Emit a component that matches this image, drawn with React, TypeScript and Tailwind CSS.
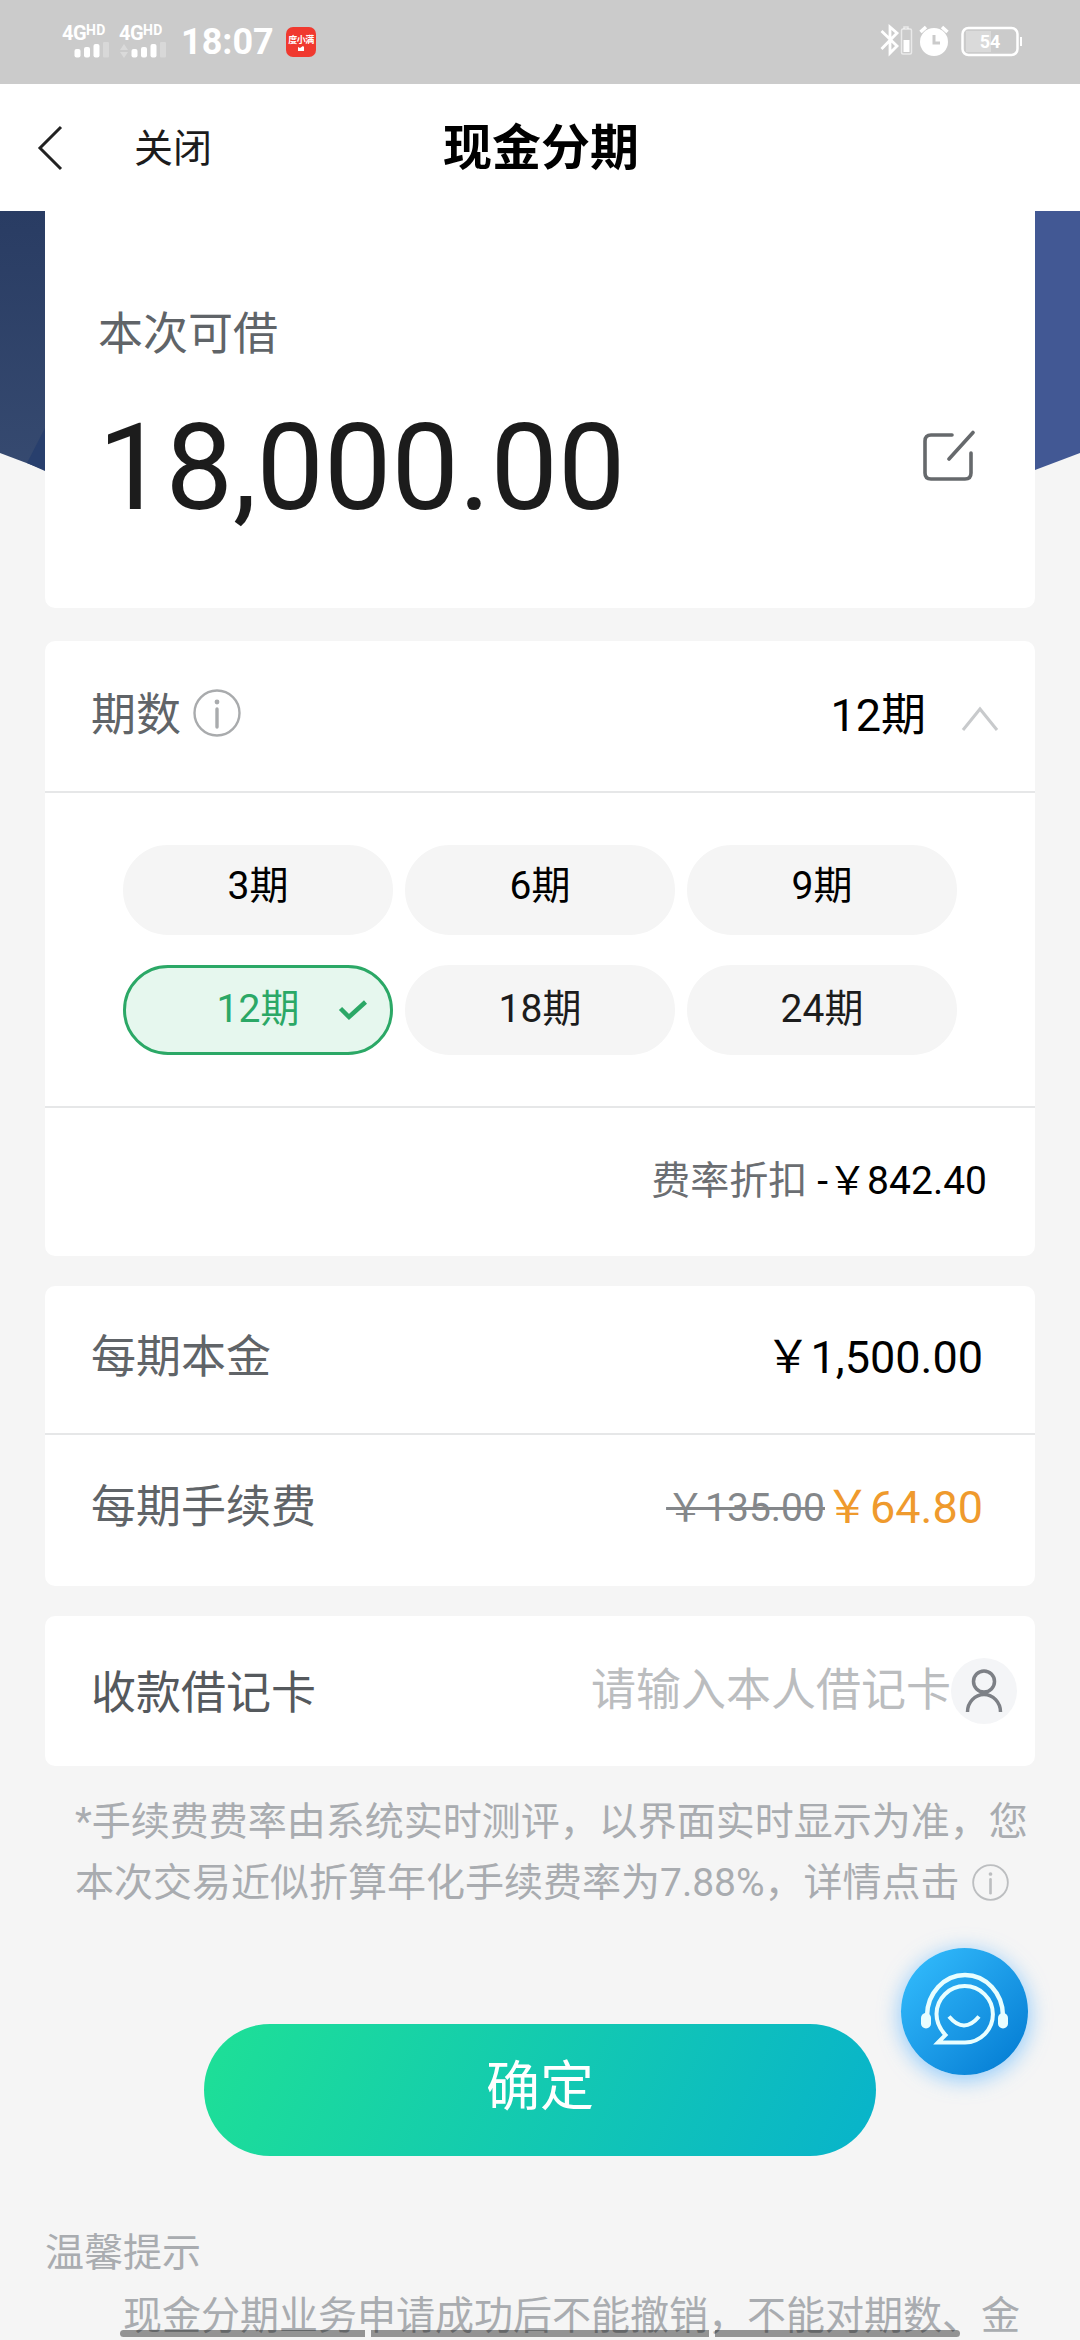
import React, { useState } from "react";

const terms = [3, 6, 9, 12, 18, 24];

function Signal({ data }: { data?: boolean }) {
  return (
    <div className="flex h-[36px] w-[48px] flex-col text-white">
      <div className="flex h-[17px] items-start leading-none font-bold">
        <span className="text-[20px] leading-[17px] tracking-[-0.5px]">4G</span>
        <span className="text-[14px] leading-[11px] tracking-[0.2px]">HD</span>
      </div>
      <svg width="48" height="18" viewBox="0 0 48 18" fill="#fff">
        {data && <path d="M1 8L5 2L9 8ZM1 10L5 16L9 10Z" opacity="0.3" />}
        <rect x="12.500" y="7" width="6" height="8.500" rx="2" />
        <rect x="22" y="5" width="6" height="10.500" rx="2" />
        <rect x="31.500" y="2" width="6" height="13.500" rx="2" />
        <rect x="41" y="0" width="6" height="15.500" rx="1" opacity="0.25" />
      </svg>
    </div>
  );
}

function StatusBar() {
  return (
    <div className="flex h-[84px] items-center bg-[#cbcbcb] pr-[58px] pl-[62px]">
      <div className="flex w-[114px] shrink-0 gap-[9px] pt-[2px]">
        <Signal />
        <Signal data />
      </div>
      <span className="ml-[5px] w-[95px] text-[36px] leading-[40px] font-bold text-white">18:07</span>
      <div className="ml-[10px] flex size-[30px] flex-col items-center rounded-[7px] bg-[#f0392f] pt-[7px] text-white">
        <span className="text-[9px] leading-[12px] font-bold tracking-[-0.5px] whitespace-nowrap">度小满</span>
        <svg width="8" height="5" viewBox="0 0 8 5" fill="#fff"><path d="M1 1L3 2L6 0L7 1V5H1Z" /></svg>
      </div>
      <div className="ml-auto flex items-center">
        <svg width="142" height="34" viewBox="0 0 142 34" fill="none" stroke="#fff" className="-mt-[2px]">
          <path d="M1.500 7L17 22L10 29V3L17 9L1.500 25" strokeWidth="2.800" />
          <path d="M24 5V3H28V5" strokeWidth="1.500" opacity="0.6" />
          <rect x="21.500" y="5" width="10" height="25" rx="1.500" strokeWidth="1.500" opacity="0.6" />
          <rect x="23.500" y="16" width="6" height="12" fill="#fff" stroke="none" />
          <circle cx="54" cy="18" r="14" fill="#fff" stroke="none" />
          <path d="M54 11V19H60" stroke="#cbcbcb" strokeWidth="3" />
          <path d="M40.500 8L46 3M62 3L67.500 8" strokeWidth="3.500" />
          <rect x="82.500" y="4" width="55" height="27" rx="6" strokeWidth="2.500" />
          <path d="M86 7H111V28H86Z" fill="#fff" stroke="none" opacity="0.3" />
          <path d="M141 13V22" strokeWidth="2" />
          <text x="110" y="24" textAnchor="middle" fontSize="18" fontWeight="700" fill="#fff" stroke="none">54</text>
        </svg>
      </div>
    </div>
  );
}

function NavBar() {
  return (
    <header className="grid h-[127px] grid-cols-[1fr_auto_1fr] items-center bg-white">
      <div className="flex items-center pl-[37px]">
        <svg width="28" height="46" viewBox="0 0 28 46" fill="none" stroke="#222" strokeWidth="3">
          <path d="M24 2L3 23L24 44" />
        </svg>
        <button className="mt-[3px] ml-[69px] text-[39px] leading-[58px] text-[#1c1c1c]">关闭</button>
      </div>
      <h1 className="mt-[3px] ml-[2px] text-[49px] leading-[72px] font-bold text-black">现金分期</h1>
      <div />
    </header>
  );
}

function InfoIcon({ size, color }: { size: number; color: string }) {
  return (
    <svg width={size} height={size} viewBox="0 0 48 48" fill="none" stroke={color} className="shrink-0">
      <circle cx="24" cy="24" r="22.500" strokeWidth="2.400" />
      <path d="M24 20V38" strokeWidth="3.400" strokeLinecap="round" />
      <circle cx="24" cy="13" r="2.400" fill={color} stroke="none" />
    </svg>
  );
}

function AmountCard() {
  return (
    <section className="relative h-[397px] rounded-b-[10px] bg-white pl-[53px]">
      <p className="pt-[91px] text-[45px] leading-[66px] text-[#606468]">本次可借</p>
      <div className="flex h-[140px] items-center justify-between pr-[59px]">
        <span className="mt-[60px] text-[120px] leading-[140px] text-[#1c1c1c]">18,000.00</span>
        <svg width="54" height="54" viewBox="0 0 54 54" fill="none" stroke="#66696c" strokeWidth="3.600" strokeLinecap="round" className="mt-[38px]">
          <path d="M30 5H9Q3 5 3 11V43Q3 49 9 49H43Q49 49 49 43V23" />
          <path d="M27 29L51 2.500" />
        </svg>
      </div>
    </section>
  );
}

function TermCard() {
  const [selected, setSelected] = useState(12);
  return (
    <section className="mt-[33px] h-[615px] rounded-[10px] bg-white">
      <div className="flex h-[152px] items-center border-b-2 border-[#e6e7e8] pr-[36px] pl-[46px]">
        <span className="text-[45px] leading-[66px] text-[#606468]">期数</span>
        <div className="-mt-[6px] ml-[12px]"><InfoIcon size={48} color="#a9abad" /></div>
        <span className="ml-auto text-[45px] leading-[66px] text-black">{selected}期</span>
        <svg width="38" height="26" viewBox="0 0 38 26" fill="none" stroke="#c8cacc" strokeWidth="3" className="mt-[5px] ml-[35px]">
          <path d="M2 24L19 3L36 24" />
        </svg>
      </div>
      <div className="grid h-[315px] grid-cols-3 content-start gap-x-[12px] gap-y-[30px] border-b-2 border-[#e6e7e8] px-[78px] pt-[52px]">
        {terms.map((t) => (
          <button
            key={t}
            onClick={() => setSelected(t)}
            className={
              t === selected
                ? "relative flex h-[90px] items-center justify-center rounded-full border-3 border-[#2ba866] bg-[#e6f7ee] text-[39px] text-[#2ba866]"
                : "relative flex h-[90px] items-center justify-center rounded-full border-3 border-[#f5f5f5] bg-[#f5f5f5] text-[39px] text-[#1c1c1c]"
            }
          >
            <span className={t < 10 ? "-mt-[8px] leading-[58px] text-black" : "-mt-[2px] leading-[58px]"}>{t}期</span>
            {t === selected && (
              <svg width="30" height="22" viewBox="0 0 30 22" fill="none" stroke="#2ba866" strokeWidth="4.500" className="absolute top-[31px] right-[22px]">
                <path d="M2.500 9.500L11 18L27.500 3" />
              </svg>
            )}
          </button>
        ))}
      </div>
      <div className="flex h-[145px] items-center justify-end pr-[48px] text-[39px] leading-[58px]">
        <span className="text-[#6b6e72]">费率折扣</span>
        <span className="ml-[10px] text-black">-￥842.40</span>
      </div>
    </section>
  );
}

function FeeCard() {
  return (
    <section className="mt-[30px] h-[300px] rounded-[10px] bg-white text-[45px] leading-[66px]">
      <div className="flex h-[149px] items-center justify-between border-b-2 border-[#e6e7e8] pr-[52px] pb-[3px] pl-[46px]">
        <span className="text-[#606468]">每期本金</span>
        <span className="text-black">￥1,500.00</span>
      </div>
      <div className="flex h-[150px] items-center pr-[52px] pb-[4px] pl-[46px]">
        <span className="mr-auto text-[#606468]">每期手续费</span>
        <span className="text-[39px] text-[#84878a] line-through">￥135.00</span>
        <span className="text-[#ef9a2d]">￥64.80</span>
      </div>
    </section>
  );
}

function DebitCard() {
  return (
    <section className="mt-[30px] flex h-[150px] items-center justify-between rounded-[10px] bg-white pr-[18px] pl-[46px] text-[45px] leading-[66px]">
      <span className="pt-[6px] text-[#55595d]">收款借记卡</span>
      <div className="flex items-center">
        <span className="text-[#bbbdbf]">请输入本人借记卡</span>
        <div className="flex size-[66px] items-center justify-center rounded-full bg-[#f4f5f7]">
          <svg width="40" height="46" viewBox="0 0 40 46" fill="none" stroke="#7d8086" strokeWidth="3.500">
            <circle cx="20" cy="13.500" r="10.500" />
            <path d="M3.500 44A16.500 17.500 0 0 1 36.500 44" />
          </svg>
        </div>
      </div>
    </section>
  );
}

function ServiceButton() {
  return (
    <button className="absolute top-[1948px] left-[901px] size-[127px] rounded-full bg-linear-135 from-[#35c0ff] to-[#0078d0] shadow-[0_4px_20px_2px_rgba(90,180,255,0.6)]">
      <svg width="127" height="127" viewBox="0 0 127 127" fill="none" stroke="#e8feff" strokeWidth="4.500">
        <path d="M26 68A38 41 0 0 1 102 68" />
        <rect x="20" y="65" width="10" height="15.500" rx="5" fill="#e8feff" stroke="none" />
        <rect x="97" y="65" width="10" height="15.500" rx="5" fill="#e8feff" stroke="none" />
        <path d="M37 94.500L44.500 87C37 79 35.500 73 35.500 66A28.200 28.200 0 1 1 64 94.500Z" strokeWidth="4" />
        <path d="M48 68.500Q63 86.500 78 68.500" strokeWidth="4" />
      </svg>
    </button>
  );
}

export default function App() {
  return (
    <div className="relative h-[2340px] w-[1080px] overflow-hidden bg-[#f5f5f5] font-['Roboto','Noto_Sans_CJK_SC',sans-serif]">
      <StatusBar />
      <NavBar />
      <svg width="1080" height="300" viewBox="0 0 1080 300" className="absolute top-[211px] left-0">
        <defs>
          <linearGradient id="left" x1="0" y1="0" x2="0" y2="1">
            <stop offset="0" stopColor="#293c63" />
            <stop offset="1" stopColor="#384c72" />
          </linearGradient>
        </defs>
        <path d="M0 0H540V300Q250 300 45 259L0 242Z" fill="url(#left)" />
        <path d="M45 217L27 252L45 260Z" fill="#283f6d" />
        <path d="M540 0H1080V242L1035 259Q800 300 540 300Z" fill="#425894" />
      </svg>
      <main className="px-[45px]">
        <AmountCard />
        <TermCard />
        <FeeCard />
        <DebitCard />
        <p className="mt-[26px] ml-[30px] text-[39px] leading-[61px] whitespace-nowrap text-[#a9acb0]">
          *手续费费率由系统实时测评，以界面实时显示为准，您
          <br />
          <span className="flex items-center gap-[12px]">
            <span>本次交易近似折算年化手续费率为7.88%，详情点击</span>
            <span className="-mt-[3px]"><InfoIcon size={37} color="#bcbec0" /></span>
          </span>
        </p>
        <button className="mx-auto mt-[110px] flex h-[132px] w-[672px] items-center justify-center rounded-full bg-linear-[115deg] from-[#1ee096] to-[#08b3cb] text-[54px] leading-[80px] text-white">
          <span className="-mt-[5px]">确定</span>
        </button>
        <div className="mt-[66px] text-[39px] leading-[63px] whitespace-nowrap text-[#a9acb0]">
          <h2>温馨提示</h2>
          <p className="indent-[78px]">现金分期业务申请成功后不能撤销，不能对期数、金</p>
        </div>
      </main>
      <ServiceButton />
      <div className="absolute top-[2330px] left-[120px] flex h-[7px] w-[840px] gap-[6px]">
        <i className="w-[245px] rounded-l-full bg-black/40" />
        <i className="w-[338px] bg-black/40" />
        <i className="w-[245px] rounded-r-full bg-black/40" />
      </div>
    </div>
  );
}
